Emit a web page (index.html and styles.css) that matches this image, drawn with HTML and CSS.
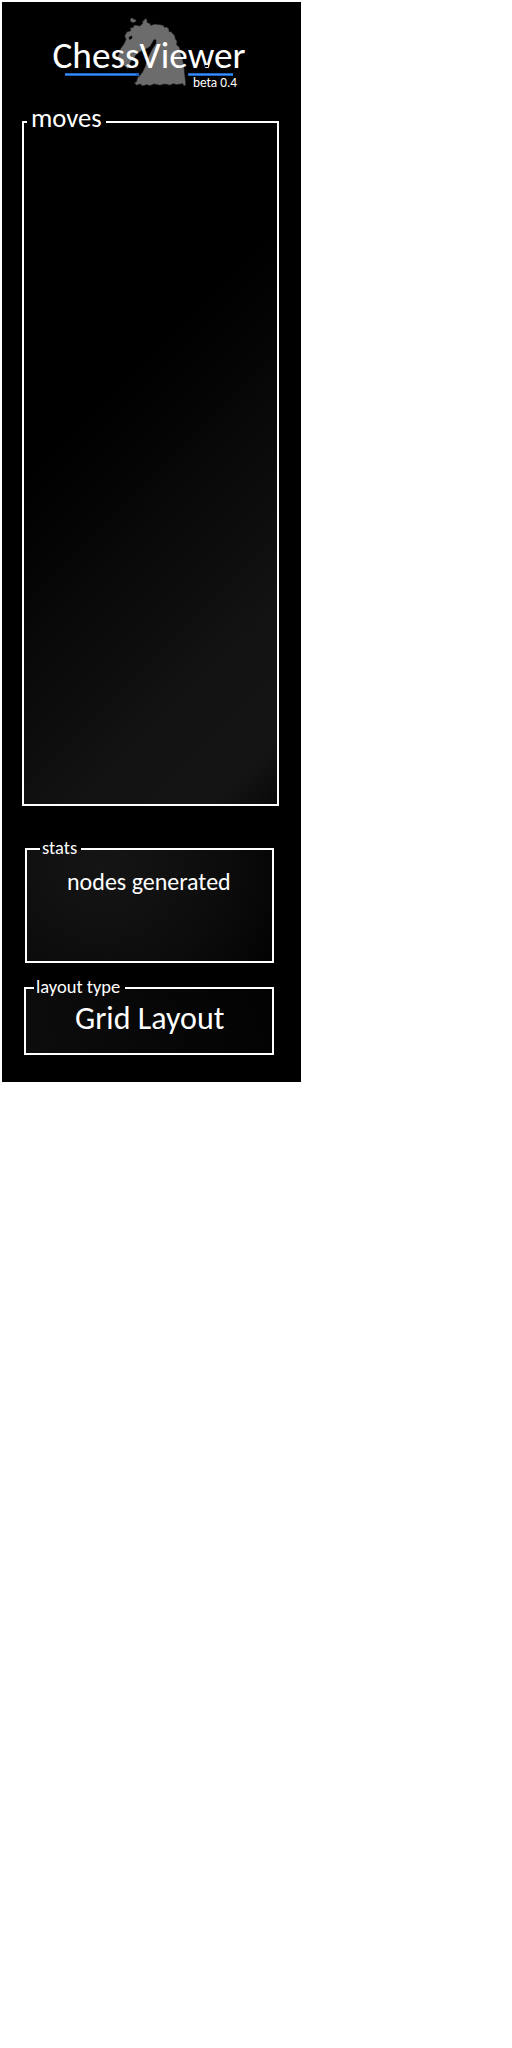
FILE: index.html
```
<!DOCTYPE html>
<html lang="en">
<head>
<meta charset="utf-8">
<title>ChessViewer</title>
<link rel="stylesheet" href="styles.css">
</head>
<body>
<main class="panel">
  <header class="brand">
    <svg class="logo" width="299" height="105" viewBox="2 2 299 105" role="img" aria-label="ChessViewer beta 0.4">
      <path class="rule-shade" d="M65 74.500H139M188 74.500H233"/>
      <path class="rule" d="M65 74.500H136M189 74.500H233"/>
      <g transform="scale(.33333)">
        <path class="knight" d="M390 56l8-3 2 4 8 2 1 4-7 5-10-2zM428 70L427 62 432 62 433 57 440 56 442 68 450 70 452 76 465 72 480 74 490 76 493 82 500 81 507 87 507 94 515 96 519 102 524 106 526 116 531 124 530 134 538 142 541 150 543 165 548 178 551 195 553 210 555 230 557 245 557 257 551 257 548 251 530 254 520 251 510 256 495 252 480 256 462 252 450 257 440 254 428 258 420 252 410 256 403 249 410 244 412 234 420 226 428 215 436 198 440 180 448 165 455 150 468 130 468 120 462 119 456 130 450 140 436 148 420 155 408 165 400 178 390 188 392 200 382 206 376 200 370 196 358 190 360 178 352 172 358 160 362 145 372 132 378 118 374 108 380 96 392 92 390 84 400 82 402 75 410 76 420 78z"/>
        <path class="nick" d="M386 112l8-5 4 4-4 6-6 2z"/>
      </g>
      <text class="name" x="52.500" y="68" textLength="193" lengthAdjust="spacingAndGlyphs">ChessViewer</text>
      <path class="nick" d="M205 65h3v2h-3z"/>
      <text class="version" x="193" y="87" textLength="44" lengthAdjust="spacingAndGlyphs">beta 0.4</text>
    </svg>
  </header>
  <fieldset class="box moves"><legend><span>moves</span></legend></fieldset>
  <fieldset class="box stats"><legend><span>stats</span></legend><p><span>nodes generated</span></p></fieldset>
  <fieldset class="box layout"><legend><span>layout type</span></legend><p><span>Grid Layout</span></p></fieldset>
</main>
</body>
</html>
```

FILE: styles.css
```
body { margin: 0; background: #fff; font-family: Carlito, Lato, sans-serif; color: #fff; }
.panel { box-sizing: border-box; width: 299px; height: 1080px; margin: 2px; background: #000; overflow: hidden; }
.brand { height: 105px; }
.logo { display: block; }
.rule { stroke: #3c90ff; stroke-width: 1; fill: none; }
.rule-shade { stroke: #1c62c0; stroke-width: 3; fill: none; }
.knight { fill: #6c6c6c; stroke: #181818; stroke-width: 2; }
.nick { fill: #000; }
.name { font-size: 37px; fill: #fff; }
.version { font-size: 13.300px; fill: #fff; }
.box { box-sizing: border-box; min-width: 0; border: 2px solid #fff; padding: 0; margin: 0; }
.box legend { padding: 0; height: 22px; line-height: 20px; font-size: 18.500px; white-space: nowrap; }
.box span { display: inline-block; }
.box p { margin: 0; white-space: nowrap; }
.moves { width: 257px; height: 699px; margin-left: 20px; background: linear-gradient(135deg, #000 38%, #131313 80%, #141414 93%, #090909 100%); }
.moves legend { margin-left: 3px; width: 79px; height: 30px; line-height: 23px; font-size: 26.700px; }
.moves span { margin-left: 4px; }
.stats { width: 249px; height: 125px; margin: 32px 0 0 23px; background: radial-gradient(ellipse 205px 190px at 75px 15px, #151515, #0c0c0c 60%, #020202); }
.stats legend { margin-left: 13px; width: 41px; }
.stats legend span { margin-left: 2px; }
.stats p { font-size: 24px; line-height: 26px; padding: 9px 0 0 40px; }
.layout { width: 250px; height: 78px; margin: 14px 0 0 22px; background: linear-gradient(75deg, #0d0d0d, #060606 60%, #030303); }
.layout legend { margin-left: 8px; width: 91px; }
.layout legend span { margin-left: 2px; }
.layout p { font-size: 32px; line-height: 34px; padding: 3px 0 0 49px; }
```
